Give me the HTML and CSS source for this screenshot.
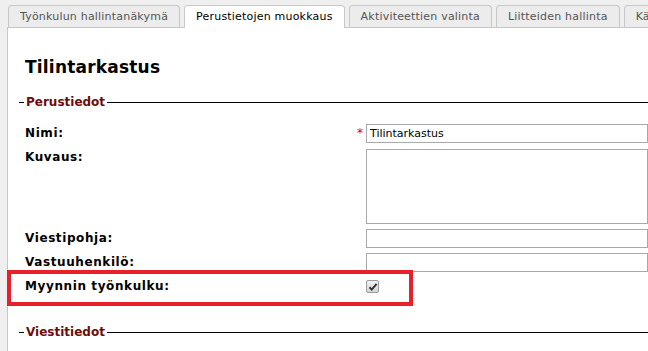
FILE: index.html
```html
<!DOCTYPE html>
<html lang="fi">
<head>
    <meta charset="UTF-8">
    <title>Tilintarkastus</title>
    <link rel="stylesheet" href="styles.css">
</head>
<body>
    <div class="tabs">
        <div class="tab">Työnkulun hallintanäkymä</div>
        <div class="tab active">Perustietojen muokkaus</div>
        <div class="tab">Aktiviteettien valinta</div>
        <div class="tab">Liitteiden hallinta</div>
        <div class="tab">Käyttöoikeudet</div>
    </div>

    <div class="panel">
        <h1 class="page-title">Tilintarkastus</h1>

        <div class="section-title">Perustiedot</div>

        <div class="form-grid">
            <label class="field-label">Nimi:</label>
            <span class="required">*</span>
            <div class="field"><input class="text-input" type="text" value="Tilintarkastus"></div>

            <label class="field-label">Kuvaus:</label>
            <span></span>
            <div class="field"><textarea class="text-area"></textarea></div>

            <label class="field-label">Viestipohja:</label>
            <span></span>
            <div class="field"><input class="text-input" type="text"></div>

            <label class="field-label">Vastuuhenkilö:</label>
            <span></span>
            <div class="field"><input class="text-input" type="text"></div>

            <label class="field-label highlight">Myynnin työnkulku:</label>
            <span></span>
            <div class="field">
                <span class="check-box">
                    <svg width="10" height="10" viewBox="0 0 10 10"><path d="M1.5 5.2 L3.8 7.6 L8.6 1.8" fill="none" stroke="#333" stroke-width="2"/></svg>
                </span>
            </div>
        </div>

        <div class="section-title second">Viestitiedot</div>
    </div>
</body>
</html>
```

FILE: styles.css
```css
body {
    margin: 0;
    background-color: #efefef;
    font-family: "DejaVu Sans", Verdana, sans-serif;
    font-size: 11px;
    color: #000;
    overflow: hidden;
    height: 351px;
}

.tabs {
    display: flex;
    gap: 4px;
    padding: 5px 0 0 8px;
    white-space: nowrap;
    margin-bottom: -1px;
    position: relative;
    z-index: 1;
}

.tab {
    height: 21px;
    line-height: 21px;
    padding: 0 11px;
    border: 1px solid #c8c8c8;
    border-bottom: none;
    border-radius: 4px 4px 0 0;
    background-color: #ececec;
    color: #555;
    letter-spacing: 0.2px;
}

.tab.active {
    background-color: #fff;
    color: #000;
    height: 22px;
}

.panel {
    margin-left: 7px;
    border-left: 1px solid #c8c8c8;
    border-top: 1px solid #c8c8c8;
    background-color: #fff;
    padding-left: 11px;
    height: 400px;
}

.page-title {
    margin: 28px 0 0 6px;
    font-size: 17px;
    line-height: 22px;
    font-weight: bold;
    letter-spacing: 0.2px;
}

.section-title {
    display: flex;
    align-items: center;
    margin-top: 17px;
    font-size: 12px;
    font-weight: bold;
    line-height: 15px;
    color: #6e0b0b;
}

.section-title::before {
    content: "";
    width: 5px;
    border-top: 1px solid #000;
    margin-right: 2px;
}

.section-title::after {
    content: "";
    flex: 1;
    border-top: 1px solid #000;
    margin-left: 2px;
}

.section-title.second {
    margin-top: 32px;
}

.form-grid {
    display: grid;
    grid-template-columns: 337px 10px 1fr;
    row-gap: 5px;
    margin-top: 14px;
}

.field-label {
    padding: 3px 0 0 6px;
    font-size: 12px;
    font-weight: bold;
    line-height: 13px;
    letter-spacing: 0.6px;
}

.required {
    color: #e00000;
    font-size: 12px;
    line-height: 19px;
    padding-left: 1px;
}

.field {
    overflow: hidden;
    display: flex;
}

.text-input {
    box-sizing: border-box;
    width: 400px;
    height: 19px;
    margin: 0;
    padding: 0 3px;
    border: 1px solid #a9a9a9;
    font-family: "DejaVu Sans", Verdana, sans-serif;
    font-size: 11px;
    color: #000;
}

.text-area {
    box-sizing: border-box;
    width: 400px;
    height: 75px;
    margin: 1px 0 0;
    border: 1px solid #a9a9a9;
    resize: none;
}

.check-box {
    box-sizing: border-box;
    width: 13px;
    height: 13px;
    margin-top: 3px;
    border: 1px solid #9a9a9a;
    border-radius: 2px;
    background: linear-gradient(#f2f2f2, #d6d6d6);
    display: flex;
    align-items: center;
    justify-content: center;
}

.highlight {
    position: relative;
}

/* rode markering rond de rij */
.highlight::after {
    content: "";
    position: absolute;
    left: -12px;
    top: -7px;
    width: 398px;
    height: 28px;
    border: 4px solid #e8202a;
}
```
